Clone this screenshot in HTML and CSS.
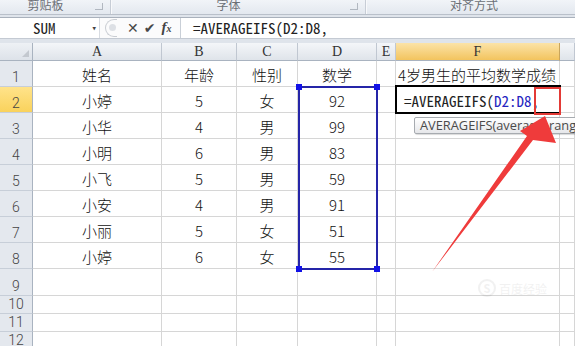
FILE: index.html
```html
<!DOCTYPE html>
<html lang="zh-CN">
<head>
    <meta charset="UTF-8">
    <title>AVERAGEIFS</title>
    <link rel="stylesheet" href="styles.css">
</head>
<body>
    <div class="ribbon">
        <div class="group g1"><span class="label">剪贴板</span><span class="launcher"></span></div>
        <div class="group g2"><span class="label">字体</span><span class="launcher"></span></div>
        <div class="group g3"><span class="label">对齐方式</span></div>
    </div>

    <div class="formulaBar">
        <div class="nameBox mono">SUM<span class="drop">&#9662;</span></div>
        <div class="fxButtons">
            <span class="grip"></span>
            <span class="btn cancel">&#10005;</span>
            <span class="btn enter">&#10004;</span>
            <span class="btn fx"><i>f</i><small>x</small></span>
        </div>
        <div class="formulaText mono">=AVERAGEIFS(D2:D8,</div>
    </div>

    <div class="sheet">
        <div class="grid">
            <div class="corner"><span></span></div>
            <div class="colHead">A</div>
            <div class="colHead">B</div>
            <div class="colHead">C</div>
            <div class="colHead">D</div>
            <div class="colHead">E</div>
            <div class="colHead active">F</div>
            <div class="colHead"></div>

            <div class="rowHead">1</div>
            <div class="cell">姓名</div><div class="cell">年龄</div><div class="cell">性别</div><div class="cell">数学</div><div class="cell"></div>
            <div class="cell left">4岁男生的平均数学成绩</div><div class="cell"></div>

            <div class="rowHead active">2</div>
            <div class="cell">小婷</div><div class="cell">5</div><div class="cell">女</div><div class="cell">92</div><div class="cell"></div>
            <div class="cell left edit mono">=AVERAGEIFS(<span class="ref">D2:D8</span>,</div><div class="cell"></div>

            <div class="rowHead">3</div>
            <div class="cell">小华</div><div class="cell">4</div><div class="cell">男</div><div class="cell">99</div><div class="cell"></div><div class="cell"></div><div class="cell"></div>

            <div class="rowHead">4</div>
            <div class="cell">小明</div><div class="cell">6</div><div class="cell">男</div><div class="cell">83</div><div class="cell"></div><div class="cell"></div><div class="cell"></div>

            <div class="rowHead">5</div>
            <div class="cell">小飞</div><div class="cell">5</div><div class="cell">男</div><div class="cell">59</div><div class="cell"></div><div class="cell"></div><div class="cell"></div>

            <div class="rowHead">6</div>
            <div class="cell">小安</div><div class="cell">4</div><div class="cell">男</div><div class="cell">91</div><div class="cell"></div><div class="cell"></div><div class="cell"></div>

            <div class="rowHead">7</div>
            <div class="cell">小丽</div><div class="cell">5</div><div class="cell">女</div><div class="cell">51</div><div class="cell"></div><div class="cell"></div><div class="cell"></div>

            <div class="rowHead">8</div>
            <div class="cell">小婷</div><div class="cell">6</div><div class="cell">女</div><div class="cell">55</div><div class="cell"></div><div class="cell"></div><div class="cell"></div>

            <div class="rowHead">9</div>
            <div class="cell"></div><div class="cell"></div><div class="cell"></div><div class="cell"></div><div class="cell"></div><div class="cell"></div><div class="cell"></div>

            <div class="rowHead">10</div>
            <div class="cell"></div><div class="cell"></div><div class="cell"></div><div class="cell"></div><div class="cell"></div><div class="cell"></div><div class="cell"></div>

            <div class="rowHead">11</div>
            <div class="cell"></div><div class="cell"></div><div class="cell"></div><div class="cell"></div><div class="cell"></div><div class="cell"></div><div class="cell"></div>

            <div class="rowHead">12</div>
            <div class="cell"></div><div class="cell"></div><div class="cell"></div><div class="cell"></div><div class="cell"></div><div class="cell"></div><div class="cell"></div>
        </div>

        <!-- overlays -->
        <div class="selection">
            <span class="handle tl"></span><span class="handle tr"></span>
            <span class="handle bl"></span><span class="handle br"></span>
        </div>
        <div class="activeCell"></div>
        <div class="tooltip">AVERAGEIFS(average_range, criteria_range1, criteria1, ...)</div>
        <div class="redBox"></div>
        <div class="watermark"><span class="wmLogo">S</span>百度经验</div>
    </div>

    <svg class="arrow" width="575" height="346" viewBox="0 0 575 346">
        <polygon fill="#ef3b3b" points="545,116 556,143 533,140 432,272 527,136 520,131"/>
    </svg>
</body>
</html>
```

FILE: styles.css
```css
body {
    margin: 0;
    width: 575px;
    height: 346px;
    overflow: hidden;
    background-color: #dfe4eb;
    font-family: "Noto Sans CJK SC", sans-serif;
    position: relative;
}
.mono {
    font-family: "Noto Sans Mono CJK SC", "DejaVu Sans Mono", monospace;
    font-size: 15px;
}

/* ribbon group labels */
.ribbon {
    display: flex;
    height: 14px;
    overflow: hidden;
    background: linear-gradient(#f1f4f8, #e3e8ef);
    border-bottom: 1px solid #b9c0ca;
}
.group {
    display: flex;
    border-right: 1px solid #c7cdd6;
    box-shadow: 1px 0 0 #f8f9fb;
    flex-shrink: 0;
}
.g1 { width: 110px; }
.g2 { width: 254px; }
.g3 { width: 216px; border-right: none; }
.label {
    flex: 1;
    text-align: center;
    font-size: 12px;
    line-height: 14px;
    margin-top: -2px;
    color: #6b6f75;
}
.launcher {
    width: 7px;
    height: 6px;
    margin: 3px 7px 0 4px;
    border-right: 1px solid #9aa1ab;
    border-bottom: 1px solid #9aa1ab;
    opacity: 0.7;
}

/* formula bar */
.formulaBar {
    display: flex;
    height: 20px;
    margin-top: 2px;
    background-color: #fff;
    border-top: 1px solid #a9b1bc;
    border-bottom: 1px solid #c4cad3;
}
.nameBox {
    width: 100px;
    box-sizing: border-box;
    padding-left: 33px;
    line-height: 20px;
    color: #222;
    position: relative;
    border-right: 1px solid #d8dce2;
}
.drop {
    position: absolute;
    right: 2px;
    top: 0;
    font-size: 9px;
    color: #444;
}
.fxButtons {
    width: 80px;
    display: flex;
    align-items: center;
    background-color: #fbfbfc;
    border-right: 1px solid #c9cfd7;
}
.grip {
    width: 12px;
    height: 18px;
    margin-left: 5px;
    border: 1px solid #c8ccd2;
    border-right: none;
    border-radius: 10px 0 0 10px;
    box-sizing: border-box;
    position: relative;
}
.grip::after {
    content: "";
    position: absolute;
    left: 3px;
    top: 4px;
    width: 7px;
    height: 7px;
    border-radius: 50%;
    background-color: #dde0e5;
}
.btn {
    color: #484848;
    font-family: "DejaVu Sans", sans-serif;
    font-size: 14px;
    line-height: 18px;
}
.cancel { margin-left: 10px; }
.enter { margin-left: 5px; }
.fx {
    margin-left: 6px;
    font-family: "Liberation Serif", serif;
    font-size: 15px;
    font-weight: bold;
    color: #444;
}
.fx small { font-size: 10px; font-style: italic; }
.formulaText {
    flex: 1;
    padding-left: 12px;
    line-height: 20px;
    color: #222;
}

/* sheet */
.sheet {
    position: relative;
    margin-top: 4px;
}
.grid {
    display: grid;
    grid-template-columns: 33px 129px 75px 61px 79px 19px 164px 15px;
    grid-template-rows: 18px repeat(8, 26px) 27px 18px 18px 18px;
    background-color: #fff;
}
.corner {
    background: linear-gradient(#eef1f5, #dde2e9);
    border-right: 1px solid #a9b3c0;
    border-bottom: 1px solid #a9b3c0;
    box-sizing: border-box;
    position: relative;
}
.corner span {
    position: absolute;
    right: 3px;
    bottom: 3px;
    width: 0;
    height: 0;
    border-left: 7px solid transparent;
    border-bottom: 7px solid #c3c8cf;
}
.colHead {
    background: linear-gradient(#f4f6f9, #dfe4ea);
    border-right: 1px solid #c0c7d1;
    border-bottom: 1px solid #a9b3c0;
    box-sizing: border-box;
    text-align: center;
    font-family: "Liberation Serif", serif;
    font-size: 14px;
    line-height: 18px;
    color: #333;
}
.colHead.active {
    background: linear-gradient(#fbe3a8, #f3c45e);
    border-right-color: #c9a55b;
}
.rowHead {
    background-color: #e4e8ee;
    border-right: 1px solid #a9b3c0;
    border-bottom: 1px solid #c7ced8;
    box-sizing: border-box;
    display: flex;
    align-items: flex-end;
    justify-content: center;
    padding-bottom: 1px;
    font-family: Roboto, sans-serif;
    font-size: 14px;
    font-weight: 300;
    line-height: 15px;
    color: #444;
}
.rowHead.active {
    background: linear-gradient(#ffe38a, #f9d25c);
}
.cell {
    border-right: 1px solid #d6d6d6;
    border-bottom: 1px solid #d6d6d6;
    box-sizing: border-box;
    display: flex;
    align-items: center;
    justify-content: center;
    padding-top: 2px;
    font-size: 15px;
    font-weight: 300;
    color: #111;
    white-space: nowrap;
}
.cell.left {
    justify-content: flex-start;
    padding-left: 2px;
}
.cell.edit {
    padding-left: 8px;
    font-weight: normal;
    color: #222;
}
.ref { color: #2525c0; }

/* overlays */
.selection {
    position: absolute;
    left: 298px;
    top: 43px;
    width: 80px;
    height: 184px;
    box-sizing: border-box;
    border: 2px solid #2525a8;
}
.handle {
    position: absolute;
    width: 6px;
    height: 6px;
    background-color: #1212e6;
}
.tl { left: -4px; top: -4px; }
.tr { right: -4px; top: -4px; }
.bl { left: -4px; bottom: -4px; }
.br { right: -4px; bottom: -4px; }
.activeCell {
    position: absolute;
    left: 395px;
    top: 42px;
    width: 166px;
    height: 29px;
    box-sizing: border-box;
    border: 2px solid #000;
}
.tooltip {
    position: absolute;
    left: 414px;
    top: 74px;
    width: 200px;
    height: 17px;
    box-sizing: border-box;
    padding-left: 5px;
    border: 1px solid #a7abb0;
    border-radius: 2px;
    background: linear-gradient(#ffffff, #e6e7ea);
    font-family: "Open Sans", sans-serif;
    font-size: 12.8px;
    line-height: 15px;
    color: #4a4a4a;
    white-space: nowrap;
    overflow: hidden;
    box-shadow: 1px 1px 1px rgba(0, 0, 0, 0.15);
}
.redBox {
    position: absolute;
    left: 534px;
    top: 44px;
    width: 27px;
    height: 28px;
    box-sizing: border-box;
    border: 2px solid #e33a36;
}
.watermark {
    position: absolute;
    left: 478px;
    top: 236px;
    font-size: 12px;
    color: #000;
    opacity: 0.05;
    display: flex;
    align-items: center;
    gap: 3px;
}
.wmLogo {
    width: 14px;
    height: 14px;
    border-radius: 50%;
    border: 2px solid #000;
    text-align: center;
    line-height: 14px;
    font-weight: bold;
    font-size: 11px;
}
.arrow {
    position: absolute;
    left: 0;
    top: 0;
    pointer-events: none;
}
```
